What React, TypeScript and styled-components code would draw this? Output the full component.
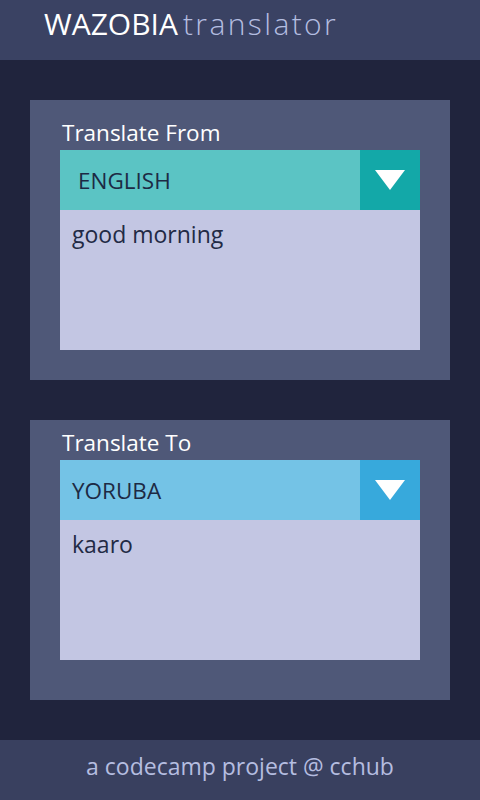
import styled, { createGlobalStyle } from "styled-components"

const GlobalStyle = createGlobalStyle`
  * { box-sizing: border-box; }
  body {
    margin: 0;
    background: #20243d;
    font-family: "Open Sans", "Noto Sans", sans-serif;
  }
`

const Page = styled.div`
  width: 480px;
  height: 800px;
  display: flex;
  flex-direction: column;
  background: #20243d;
`

const Header = styled.header`
  height: 60px;
  background: #3a4263;
  padding-left: 44px;
  display: flex;
  align-items: center;
`

const Brand = styled.div`
  font-size: 30px;
  line-height: 1;
  margin-top: -12px;
`

const BrandBold = styled.span`
  color: #ffffff;
`

const BrandLight = styled.span`
  color: #b4bde0;
  font-weight: 300;
  letter-spacing: 0.08em;
  margin-left: 5px;
`

const Main = styled.main`
  flex: 1;
  padding: 40px 30px;
  display: flex;
  flex-direction: column;
  gap: 40px;
`

const Card = styled.section<{ $compact?: boolean }>`
  background: #4f5878;
  padding: ${(p) => (p.$compact ? "6px 30px 40px" : "16px 30px 30px")};
  display: flex;
  flex-direction: column;
`

const Label = styled.div`
  color: #ffffff;
  font-size: 22.5px;
  line-height: 34px;
  padding-left: 2px;
`

const Select = styled.div<{ $bg: string }>`
  height: 60px;
  display: flex;
  background: ${(p) => p.$bg};
`

const SelectValue = styled.div<{ $inset: number }>`
  flex: 1;
  display: flex;
  align-items: center;
  padding-left: ${(p) => p.$inset}px;
  color: #1d2a44;
  font-size: 22.5px;
`

const Arrow = styled.div<{ $bg: string }>`
  width: 60px;
  background: ${(p) => p.$bg};
  display: flex;
  align-items: center;
  justify-content: center;
`

const TextArea = styled.div`
  height: 140px;
  background: #c3c6e3;
  color: #222a45;
  font-size: 23px;
  padding: 9px 12px;
  line-height: 30px;
`

const Footer = styled.footer`
  height: 60px;
  background: #39405f;
  color: #b5bde0;
  font-size: 23px;
  display: flex;
  align-items: center;
  justify-content: center;
  padding-bottom: 8px;
`

const Triangle = () => (
  <svg width="32" height="24" viewBox="0 0 32 24">
    <polygon points="1,2 31,2 16,22" fill="#ffffff" />
  </svg>
)

type PanelProps = {
  label: string
  language: string
  text: string
  bg: string
  arrowBg: string
  inset: number
  compact?: boolean
}

const Panel = ({ label, language, text, bg, arrowBg, inset, compact }: PanelProps) => (
  <Card $compact={compact}>
    <Label>{label}</Label>
    <Select $bg={bg}>
      <SelectValue $inset={inset}>{language}</SelectValue>
      <Arrow $bg={arrowBg}>
        <Triangle />
      </Arrow>
    </Select>
    <TextArea>{text}</TextArea>
  </Card>
)

export default function App() {
  return (
    <Page>
      <GlobalStyle />
      <Header>
        <Brand>
          <BrandBold>WAZOBIA</BrandBold>
          <BrandLight>translator</BrandLight>
        </Brand>
      </Header>
      <Main>
        <Panel
          label="Translate From"
          language="ENGLISH"
          text="good morning"
          bg="#5bc4c4"
          arrowBg="#13a8a8"
          inset={18}
        />
        <Panel
          label="Translate To"
          language="YORUBA"
          text="kaaro"
          bg="#74c3e6"
          arrowBg="#37a9dc"
          inset={12}
          compact
        />
      </Main>
      <Footer>a codecamp project @ cchub</Footer>
    </Page>
  )
}
